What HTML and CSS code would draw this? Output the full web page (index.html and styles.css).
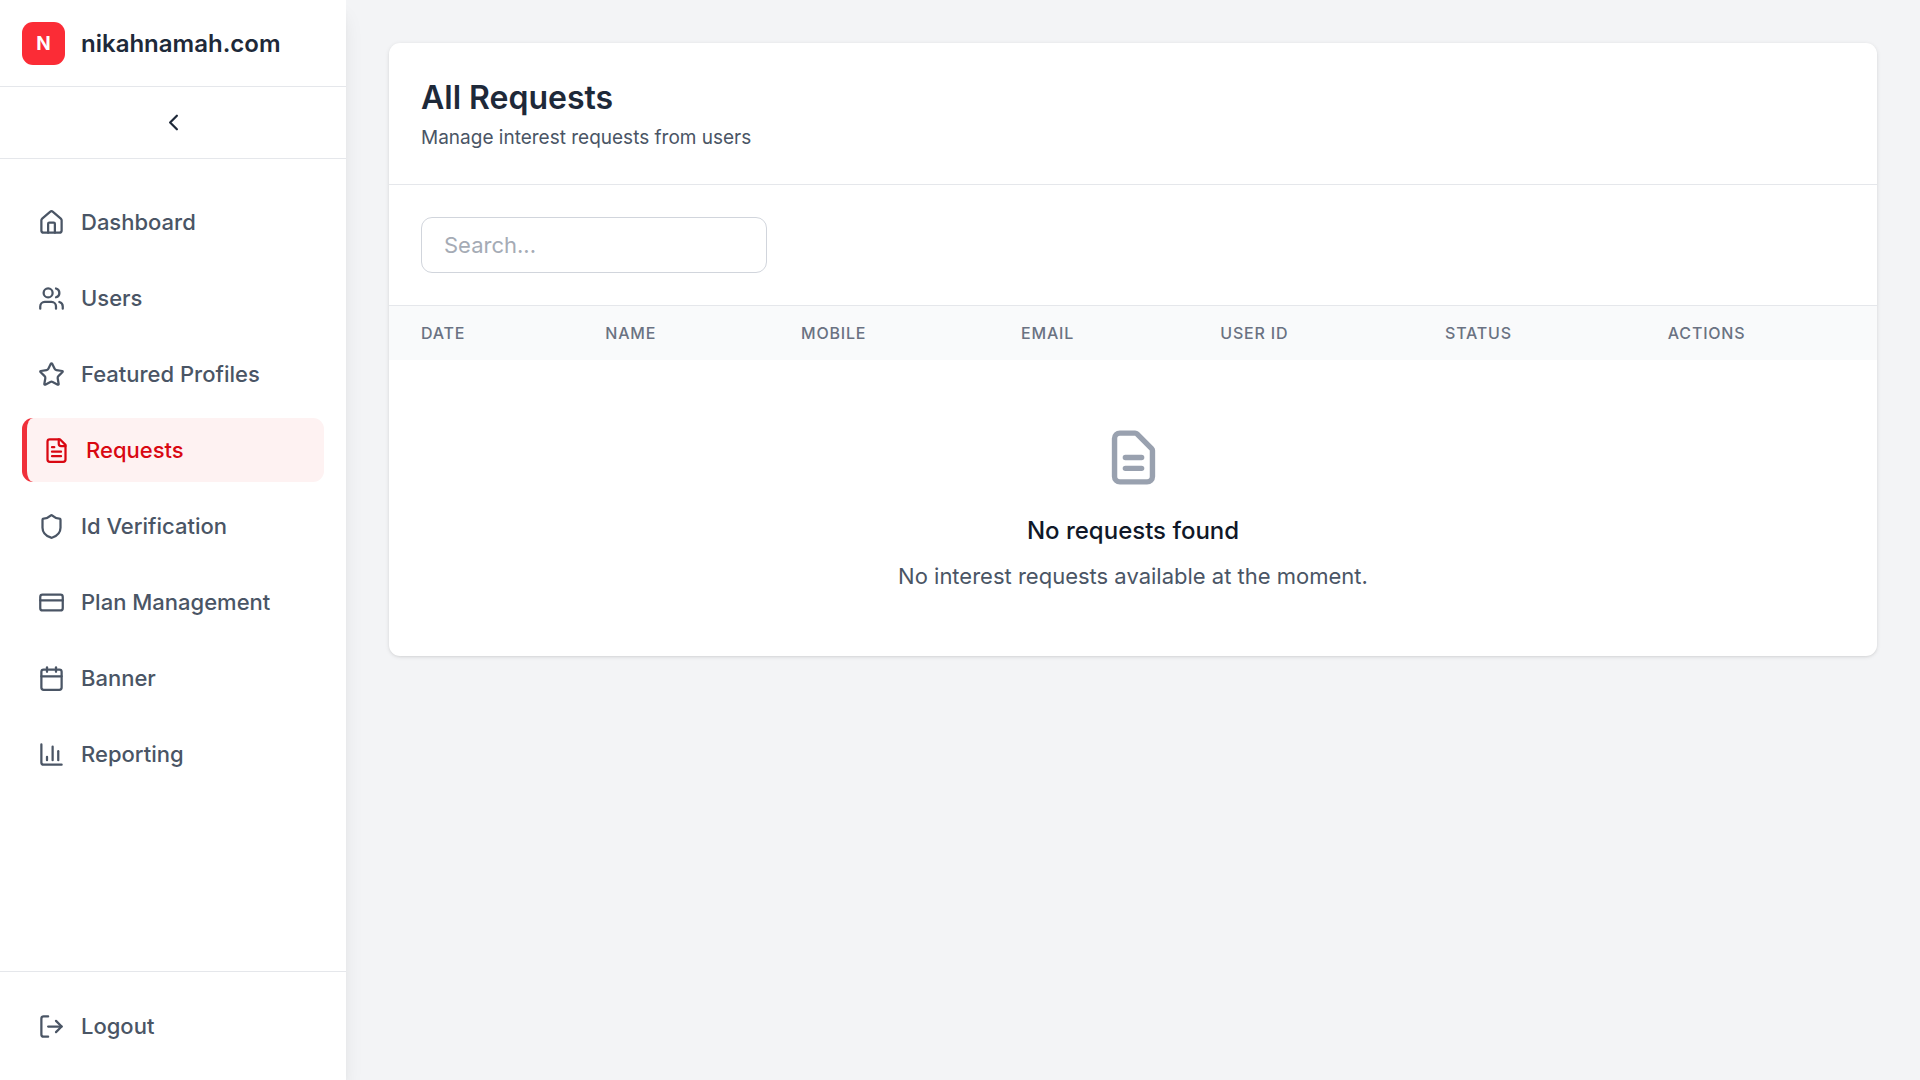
FILE: index.html
```html
<!DOCTYPE html>
<html lang="en">
<head>
	<meta charset="UTF-8">
	<meta name="viewport" content="width=device-width, initial-scale=1">
	<title>All Requests - nikahnamah.com</title>
	<link rel="stylesheet" href="styles.css">
</head>
<body>
<div class="layout">
	<aside class="sidebar">
		<div class="brand">
			<span class="logo">N</span>
			<span class="brand-name">nikahnamah.com</span>
		</div>
		<div class="collapse">
			<button type="button" class="collapse-button" aria-label="Collapse sidebar">
				<svg class="icon" viewBox="0 0 24 24"><path d="m15 18-6-6 6-6"/></svg>
			</button>
		</div>

		<nav class="menu">
			<a href="#" class="menu-item">
				<svg class="icon" viewBox="0 0 24 24"><path d="M15 21v-8a1 1 0 0 0-1-1h-4a1 1 0 0 0-1 1v8"/><path d="M3 10a2 2 0 0 1 .709-1.528l7-5.999a2 2 0 0 1 2.582 0l7 5.999A2 2 0 0 1 21 10v9a2 2 0 0 1-2 2H5a2 2 0 0 1-2-2z"/></svg>
				Dashboard
			</a>
			<a href="#" class="menu-item">
				<svg class="icon" viewBox="0 0 24 24"><path d="M16 21v-2a4 4 0 0 0-4-4H6a4 4 0 0 0-4 4v2"/><circle cx="9" cy="7" r="4"/><path d="M22 21v-2a4 4 0 0 0-3-3.87"/><path d="M16 3.13a4 4 0 0 1 0 7.75"/></svg>
				Users
			</a>
			<a href="#" class="menu-item">
				<svg class="icon" viewBox="0 0 24 24"><path d="M11.525 2.295a.53.53 0 0 1 .95 0l2.31 4.679a2.123 2.123 0 0 0 1.595 1.16l5.166.756a.53.53 0 0 1 .294.904l-3.736 3.638a2.123 2.123 0 0 0-.611 1.878l.882 5.14a.53.53 0 0 1-.771.56l-4.618-2.428a2.122 2.122 0 0 0-1.973 0L6.396 21.01a.53.53 0 0 1-.77-.56l.881-5.139a2.122 2.122 0 0 0-.611-1.879L2.16 9.795a.53.53 0 0 1 .294-.906l5.165-.755a2.122 2.122 0 0 0 1.597-1.16z"/></svg>
				Featured Profiles
			</a>
			<a href="#" class="menu-item active" aria-current="page">
				<svg class="icon" viewBox="0 0 24 24"><path d="M15 2H6a2 2 0 0 0-2 2v16a2 2 0 0 0 2 2h12a2 2 0 0 0 2-2V7Z"/><path d="M14 2v4a2 2 0 0 0 2 2h4"/><path d="M10 9H8"/><path d="M16 13H8"/><path d="M16 17H8"/></svg>
				Requests
			</a>
			<a href="#" class="menu-item">
				<svg class="icon" viewBox="0 0 24 24"><path d="M20 13c0 5-3.5 7.5-7.66 8.95a1 1 0 0 1-.67-.01C7.5 20.5 4 18 4 13V6a1 1 0 0 1 1-1c2 0 4.5-1.2 6.24-2.72a1.17 1.17 0 0 1 1.52 0C14.51 3.81 17 5 19 5a1 1 0 0 1 1 1z"/></svg>
				Id Verification
			</a>
			<a href="#" class="menu-item">
				<svg class="icon" viewBox="0 0 24 24"><rect width="20" height="14" x="2" y="5" rx="2"/><path d="M2 10h20"/></svg>
				Plan Management
			</a>
			<a href="#" class="menu-item">
				<svg class="icon" viewBox="0 0 24 24"><path d="M8 2v4"/><path d="M16 2v4"/><rect width="18" height="18" x="3" y="4" rx="2"/><path d="M3 10h18"/></svg>
				Banner
			</a>
			<a href="#" class="menu-item">
				<svg class="icon" viewBox="0 0 24 24"><path d="M3 3v16a2 2 0 0 0 2 2h16"/><path d="M18 17V9"/><path d="M13 17V5"/><path d="M8 17v-3"/></svg>
				Reporting
			</a>
		</nav>

		<div class="sidebar-footer">
			<button type="button" class="menu-item">
				<svg class="icon" viewBox="0 0 24 24"><path d="M9 21H5a2 2 0 0 1-2-2V5a2 2 0 0 1 2-2h4"/><path d="m16 17 5-5-5-5"/><path d="M21 12H9"/></svg>
				Logout
			</button>
		</div>
	</aside>

	<main class="content">
		<section class="card">
			<header class="card-header">
				<h1>All Requests</h1>
				<p>Manage interest requests from users</p>
			</header>

			<div class="toolbar">
				<input type="search" class="search" placeholder="Search..." aria-label="Search requests">
			</div>

			<table class="requests">
				<thead>
					<tr>
						<th scope="col">Date</th>
						<th scope="col">Name</th>
						<th scope="col">Mobile</th>
						<th scope="col">Email</th>
						<th scope="col">User ID</th>
						<th scope="col">Status</th>
						<th scope="col">Actions</th>
					</tr>
				</thead>
			</table>

			<div class="empty">
				<svg class="empty-icon" viewBox="0 0 24 24"><path d="M9 12h6m-6 4h6m2 5H7a2 2 0 01-2-2V5a2 2 0 012-2h5.586a1 1 0 01.707.293l5.414 5.414a1 1 0 01.293.707V19a2 2 0 01-2 2z"/></svg>
				<h2>No requests found</h2>
				<p>No interest requests available at the moment.</p>
			</div>
		</section>
	</main>
</div>
</body>
</html>
```
FILE: styles.css
```css
* {
	box-sizing: border-box;
	margin: 0;
}

body {
	background: #f3f4f6;
	color: #1e2939;
	font-family: Inter, "Liberation Sans", sans-serif;
	font-size: 22px;
	line-height: 32px;
}

button,
input {
	font: inherit;
}

.layout {
	display: flex;
	min-height: 100vh;
}

/* Sidebar */
.sidebar {
	display: flex;
	flex-direction: column;
	flex-shrink: 0;
	width: 346px;
	background: #fff;
	box-shadow: 0 14px 20px -4px rgba(0, 0, 0, 0.1), 0 5px 8px -5px rgba(0, 0, 0, 0.1);
}

.brand {
	display: flex;
	align-items: center;
	gap: 16px;
	padding: 22px 22px 21px;
	border-bottom: 1px solid #e5e7eb;
}

.logo {
	display: flex;
	align-items: center;
	justify-content: center;
	width: 43px;
	height: 43px;
	border-radius: 11px;
	background: #fb2c36;
	color: #fff;
	font-size: 19px;
	font-weight: 700;
}

.brand-name {
	font-size: 24px;
	font-weight: 600;
}

.collapse {
	display: flex;
	padding: 11px;
	border-bottom: 1px solid #e5e7eb;
}

.collapse-button {
	display: flex;
	align-items: center;
	justify-content: center;
	width: 100%;
	height: 49px;
	border: 0;
	border-radius: 11px;
	background: none;
	color: #1e2939;
	cursor: pointer;
}

.icon {
	flex-shrink: 0;
	width: 27px;
	height: 27px;
	fill: none;
	stroke: currentColor;
	stroke-width: 2;
	stroke-linecap: round;
	stroke-linejoin: round;
}

.menu {
	display: flex;
	flex: 1;
	flex-direction: column;
	gap: 12px;
	padding: 31px 22px;
}

.menu-item {
	display: flex;
	align-items: center;
	gap: 16px;
	width: 100%;
	padding: 16px;
	border: 0;
	border-radius: 11px;
	background: none;
	color: #4a5565;
	font-weight: 500;
	text-align: left;
	text-decoration: none;
	cursor: pointer;
}

.menu-item:hover {
	background: #f9fafb;
}

.menu-item.active {
	border-left: 5px solid #f0303a;
	background: #fef2f2;
	color: #d90812;
}

.sidebar-footer {
	padding: 22px;
	border-top: 1px solid #e5e7eb;
}

/* Content */
.content {
	flex: 1;
	min-width: 0;
	padding: 43px;
}

.card {
	overflow: hidden;
	border-radius: 11px;
	background: #fff;
	box-shadow: 0 1px 4px rgba(0, 0, 0, 0.1), 0 1px 3px -1px rgba(0, 0, 0, 0.1);
}

.card-header {
	padding: 33px 32px;
	border-bottom: 1px solid #e5e7eb;
}

.card-header h1 {
	font-size: 32px;
	font-weight: 600;
	line-height: 44px;
}

.card-header p {
	margin-top: 4px;
	color: #4a5565;
	font-size: 19px;
	line-height: 27px;
}

.toolbar {
	padding: 32px;
	border-bottom: 1px solid #e5e7eb;
}

.search {
	display: block;
	width: 346px;
	max-width: 100%;
	height: 56px;
	padding: 11px 22px;
	border: 1px solid #d1d5dc;
	border-radius: 11px;
	background: #fff;
	color: #1e2939;
	appearance: none;
}

.search::placeholder {
	color: #a5abb5;
}

.requests {
	width: 100%;
	border-collapse: collapse;
}

.requests th {
	padding: 16px 32px;
	background: #f9fafb;
	color: #6a7282;
	font-size: 16px;
	font-weight: 500;
	letter-spacing: 0.05em;
	line-height: 22px;
	text-align: left;
	text-transform: uppercase;
}

.empty {
	padding: 65px 32px 64px;
	text-align: center;
}

.empty-icon {
	display: block;
	width: 65px;
	height: 65px;
	margin: 0 auto 22px;
	fill: none;
	stroke: #99a1af;
	stroke-width: 2;
	stroke-linecap: round;
	stroke-linejoin: round;
}

.empty h2 {
	margin-bottom: 11px;
	color: #101828;
	font-size: 24px;
	font-weight: 500;
	line-height: 37px;
}

.empty p {
	color: #4a5565;
}
```
